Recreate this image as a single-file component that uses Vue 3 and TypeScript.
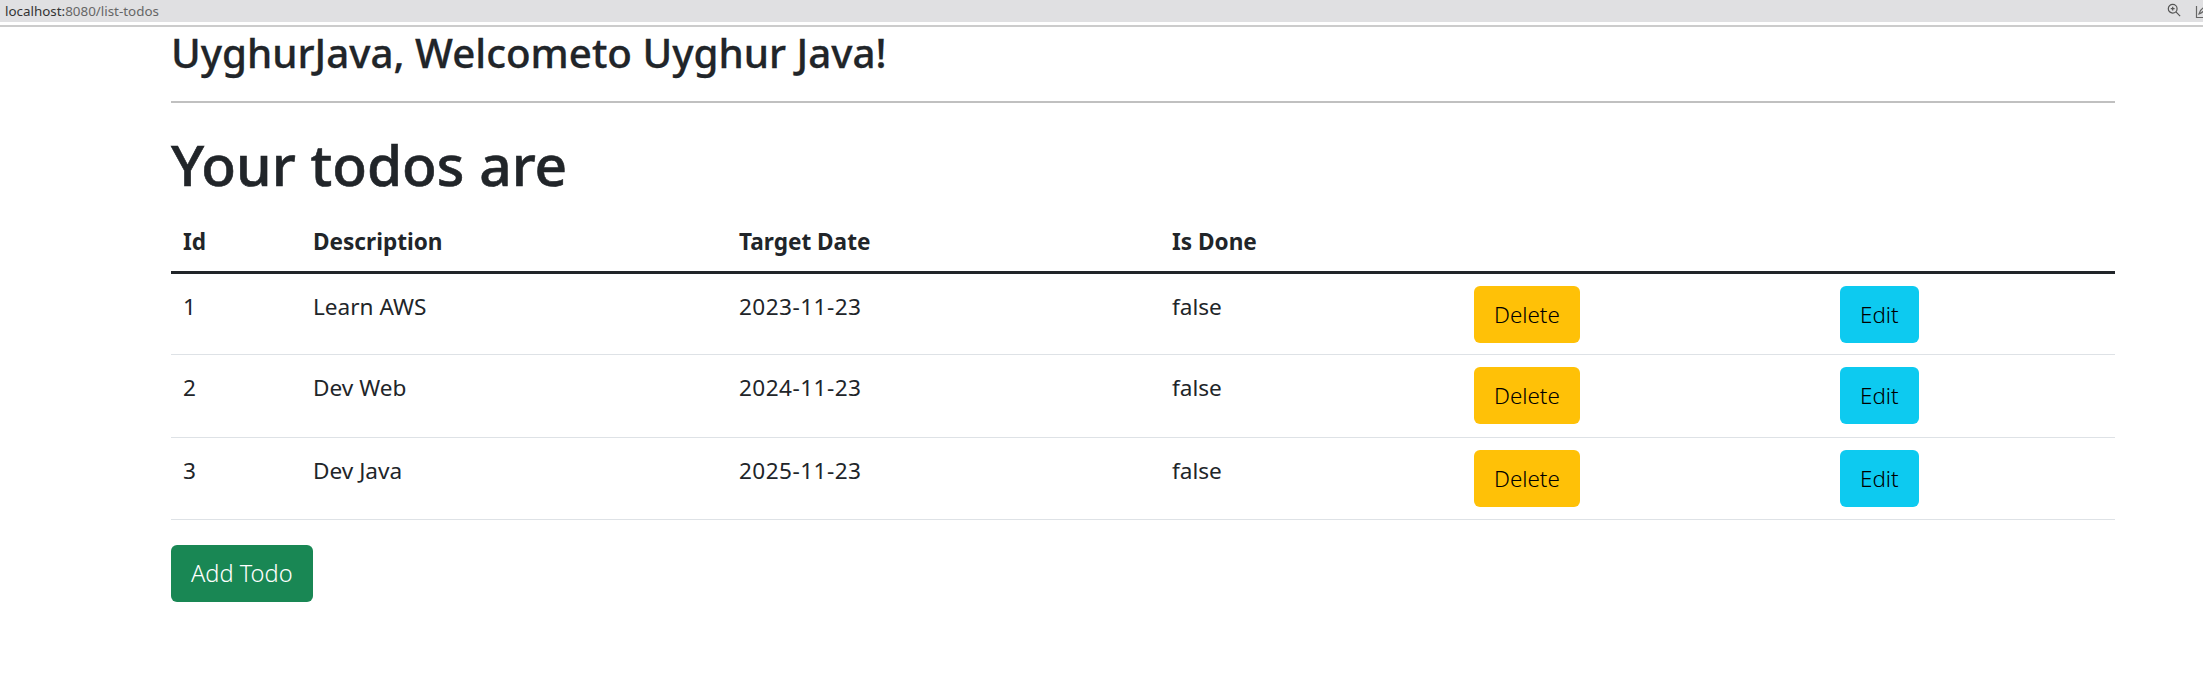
<script setup lang="ts">
interface Todo {
  id: number
  description: string
  targetDate: string
  done: boolean
}

const todos: Todo[] = [
  { id: 1, description: 'Learn AWS', targetDate: '2023-11-23', done: false },
  { id: 2, description: 'Dev Web', targetDate: '2024-11-23', done: false },
  { id: 3, description: 'Dev Java', targetDate: '2025-11-23', done: false },
]
</script>

<template>
  <div class="page">
    <div class="address-bar">
      <div class="url"><span class="host">localhost:</span>8080/list-todos</div>
      <div class="bar-icons">
        <svg width="14" height="14" viewBox="0 0 16 16" fill="none" stroke="#555" stroke-width="1.4">
          <circle cx="6.5" cy="6.5" r="5" />
          <path d="M10.2 10.2 15 15M4.3 6.5h4.4M6.5 4.3v4.4" />
        </svg>
        <svg width="16" height="16" viewBox="0 0 16 16" fill="none" stroke="#666" stroke-width="1.2">
          <path d="M1.5 3v11.5H14M4 11c1-4 4-7 9-8-2 3-4 6-9 8Z" />
        </svg>
      </div>
    </div>
    <div class="bar-line"></div>

    <div class="container">
      <div class="welcome">UyghurJava, Welcometo Uyghur Java!</div>
      <hr class="divider" />
      <h1 class="title">Your todos are</h1>
      <table class="table">
        <colgroup>
          <col class="c-id" />
          <col class="c-desc" />
          <col class="c-date" />
          <col class="c-done" />
          <col class="c-del" />
          <col />
        </colgroup>
        <thead>
          <tr>
            <th>Id</th>
            <th>Description</th>
            <th>Target Date</th>
            <th>Is Done</th>
            <th></th>
            <th></th>
          </tr>
        </thead>
        <tbody>
          <tr v-for="todo in todos" :key="todo.id">
            <td>{{ todo.id }}</td>
            <td>{{ todo.description }}</td>
            <td class="date">{{ todo.targetDate }}</td>
            <td>{{ todo.done }}</td>
            <td class="action"><a class="btn btn-warning">Delete</a></td>
            <td class="action"><a class="btn btn-info">Edit</a></td>
          </tr>
        </tbody>
      </table>
      <a class="btn btn-success">Add Todo</a>
    </div>
  </div>
</template>

<style scoped>
.page {
  height: 697px;
  background: #fff;
  color: #212529;
  font-family: "Noto Sans", "Open Sans", sans-serif;
  overflow: hidden;
}

.address-bar {
  height: 22px;
  background: #e0e0e2;
  display: flex;
  justify-content: space-between;
  align-items: center;
  padding-left: 5px;
}

.bar-line {
  height: 2px;
  margin-top: 3px;
  background: #ccc;
}

.url {
  font-size: 13.4px;
  color: #666;
}

.host {
  color: #333;
}

.bar-icons {
  display: flex;
  gap: 14px;
  margin-right: -8px;
}

.container {
  margin: 0 88px 0 171px;
}

.welcome {
  font-size: 40.3px;
  font-weight: 500;
  line-height: 50px;
  margin-top: 1px;
  -webkit-text-stroke: 0.3px #212529;
}

.divider {
  margin: 23px 0 0;
  border: 0;
  border-top: 2px solid #c0c0c0;
}

.title {
  font-size: 56.8px;
  font-weight: 500;
  line-height: 68px;
  margin: 27px 0 19px;
  -webkit-text-stroke: 0.6px #212529;
}

.table {
  width: 100%;
  border-collapse: collapse;
  table-layout: fixed;
  font-size: 22.6px;
  margin-bottom: 25px;
}

.c-id { width: 130px; }
.c-desc { width: 426px; }
.c-date { width: 433px; }
.c-done { width: 302px; }
.c-del { width: 366px; }

th {
  text-align: left;
  font-weight: 700;
  padding: 8px 12px;
  height: 55px;
  box-sizing: border-box;
  vertical-align: top;
  line-height: 33px;
  border-bottom: 3px solid #212529;
}

td {
  padding: 16px 12px 0;
  height: 82.5px;
  box-sizing: border-box;
  vertical-align: top;
  line-height: 34px;
  border-bottom: 1px solid #dee2e6;
}

td.date {
  letter-spacing: 0.45px;
}

td.action {
  padding-top: 12px;
}

.btn {
  display: inline-block;
  box-sizing: border-box;
  height: 57px;
  line-height: 57px;
  padding: 0 20px;
  border-radius: 6px;
  font-size: 22.4px;
  font-weight: 300;
}

.btn-warning {
  background: #ffc107;
  color: #000;
}

.btn-info {
  background: #0dcaf0;
  color: #000;
}

.btn-success {
  background: #198754;
  color: #fff;
  font-size: 23.6px;
}
</style>
